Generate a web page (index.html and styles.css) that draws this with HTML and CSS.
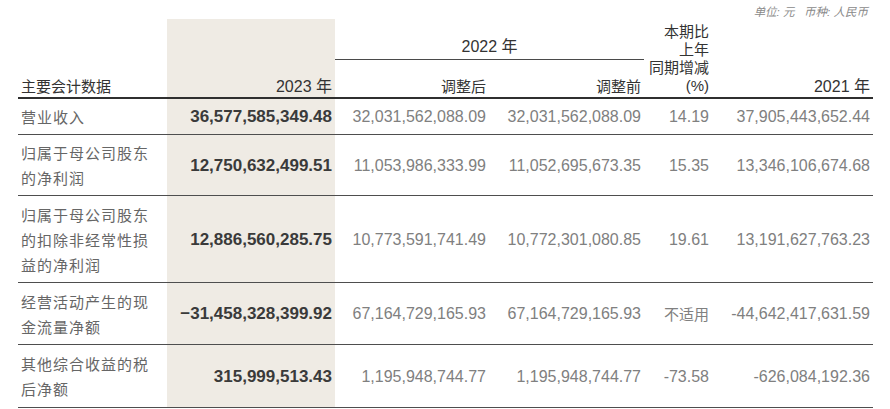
FILE: index.html
```html
<!DOCTYPE html>
<html lang="zh">
<head>
<meta charset="utf-8">
<link rel="stylesheet" href="styles.css">
</head>
<body>
<div class="wrap">
  <div class="unit">单位: 元&nbsp;&nbsp;&nbsp;币种: 人民币</div>
  <table class="fin">
    <colgroup>
      <col class="c-label"><col class="c-cur"><col class="c-adj"><col class="c-adj2"><col class="c-pct"><col class="c-prev">
    </colgroup>
    <thead>
      <tr class="h1">
        <th rowspan="2" class="lbl hb">主要会计数据</th>
        <th rowspan="2" class="cur hb">2023 年</th>
        <th colspan="2" class="yr">2022 年</th>
        <th rowspan="2" class="pct hb">本期比<br>上年<br>同期增减<br>(%)</th>
        <th rowspan="2" class="hb">2021 年</th>
      </tr>
      <tr class="h2">
        <th class="hb">调整后</th>
        <th class="hb">调整前</th>
      </tr>
    </thead>
    <tbody>
      <tr class="r1">
        <td class="lbl">营业收入</td>
        <td class="cur">36,577,585,349.48</td>
        <td>32,031,562,088.09</td>
        <td>32,031,562,088.09</td>
        <td>14.19</td>
        <td>37,905,443,652.44</td>
      </tr>
      <tr class="r2">
        <td class="lbl">归属于母公司股东<br>的净利润</td>
        <td class="cur">12,750,632,499.51</td>
        <td>11,053,986,333.99</td>
        <td>11,052,695,673.35</td>
        <td>15.35</td>
        <td>13,346,106,674.68</td>
      </tr>
      <tr class="r3">
        <td class="lbl">归属于母公司股东<br>的扣除非经常性损<br>益的净利润</td>
        <td class="cur">12,886,560,285.75</td>
        <td>10,773,591,741.49</td>
        <td>10,772,301,080.85</td>
        <td>19.61</td>
        <td>13,191,627,763.23</td>
      </tr>
      <tr class="r4">
        <td class="lbl">经营活动产生的现<br>金流量净额</td>
        <td class="cur">−31,458,328,399.92</td>
        <td>67,164,729,165.93</td>
        <td>67,164,729,165.93</td>
        <td class="cjk">不适用</td>
        <td>-44,642,417,631.59</td>
      </tr>
      <tr class="r5">
        <td class="lbl">其他综合收益的税<br>后净额</td>
        <td class="cur">315,999,513.43</td>
        <td>1,195,948,744.77</td>
        <td>1,195,948,744.77</td>
        <td>-73.58</td>
        <td>-626,084,192.36</td>
      </tr>
    </tbody>
  </table>
</div>
</body>
</html>
```

FILE: styles.css
```css
html, body {
  margin: 0;
  padding: 0;
  background: #ffffff;
}

.wrap {
  padding-left: 18px;
  width: 855px;
  font-family: "Liberation Sans", "Noto Sans CJK SC", sans-serif;
}

.unit {
  height: 14px;
  padding-top: 5px;
  line-height: 14px;
  font-size: 11.5px;
  font-style: italic;
  color: #8a8a8a;
  text-align: right;
  padding-right: 5px;
}

.fin {
  width: 855px;
  table-layout: fixed;
  border-collapse: separate;
  border-spacing: 0;
}

.c-label { width: 149px; }
.c-cur { width: 168px; }
.c-adj { width: 154px; }
.c-adj2 { width: 155px; }
.c-pct { width: 69px; }
.c-prev { width: 160px; }

.fin th,
.fin td {
  padding: 0 3px;
  text-align: right;
  white-space: nowrap;
}

.fin th {
  font-weight: normal;
  color: #333333;
  font-size: 16px;
  vertical-align: bottom;
  line-height: 20px;
}

.fin th.lbl,
.fin td.lbl {
  text-align: left;
}

.fin th.lbl {
  font-size: 15px;
  font-family: "Noto Sans CJK SC", sans-serif;
  padding-bottom: 1px;
}

.h1 { height: 41px; }
.h2 { height: 39px; }

.fin th.yr {
  text-align: center;
  border-bottom: 1px solid #4a4a4a;
  padding-bottom: 2px;
}

.fin .h2 th {
  font-size: 15px;
  font-family: "Noto Sans CJK SC", sans-serif;
  padding-bottom: 1px;
}

.fin th.hb {
  border-bottom: 2px solid #2f2f2f;
}

.fin th.pct {
  font-size: 15px;
  line-height: 18px;
  padding-bottom: 2px;
  padding-right: 4px;
}

.fin .cur {
  background: #efebe4;
}

.fin td {
  font-size: 16px;
  color: #808080;
  line-height: 25px;
  vertical-align: middle;
  border-bottom: 1px solid #4e4e4e;
}

.fin td.cur {
  font-size: 17px;
  font-weight: bold;
  color: #3a3a3a;
}

.fin td.lbl {
  font-family: "Noto Sans CJK SC", sans-serif;
  font-size: 15px;
  letter-spacing: 1px;
  color: #666666;
}

.fin td.cjk {
  font-family: "Noto Sans CJK SC", sans-serif;
  font-size: 15px;
}

.fin td:nth-child(5) {
  padding-right: 4px;
}

.r1 { height: 36px; }
.r2 { height: 61px; }
.r3 { height: 87px; }
.r4 { height: 62px; }
.r5 { height: 63px; }
```
